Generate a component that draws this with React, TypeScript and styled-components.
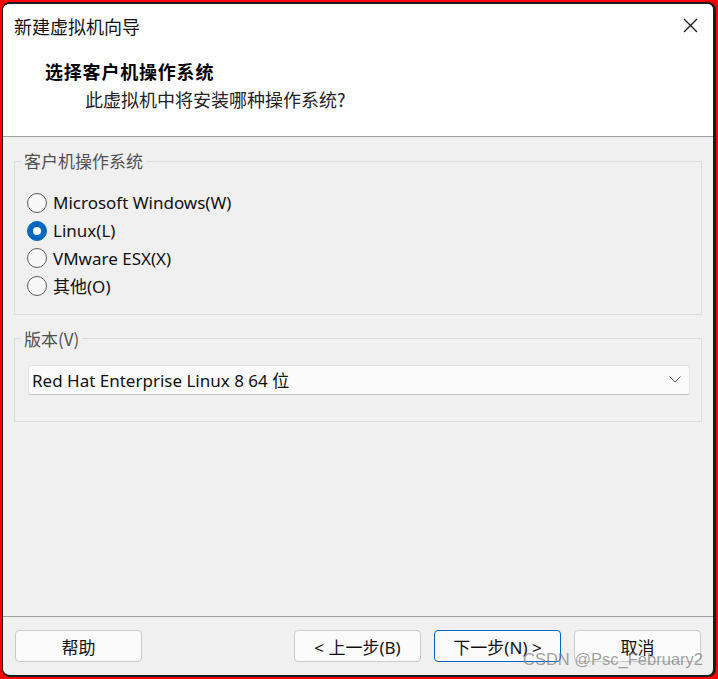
import { useState } from "react";
import styled, { createGlobalStyle, css } from "styled-components";

const GlobalStyle = createGlobalStyle`
  html, body {
    margin: 0;
    padding: 0;
  }
  body {
    background: #ff0000;
    font-family: "Noto Sans", "Noto Sans CJK SC", sans-serif;
  }
  * {
    box-sizing: border-box;
  }
`;

const cjk = `"Noto Sans CJK SC", "Noto Sans", sans-serif`;

const Frame = styled.div`
  position: relative;
  width: 718px;
  height: 679px;
  padding: 2px;
  background: #ff0000;
`;

const Window = styled.div`
  display: flex;
  flex-direction: column;
  height: 100%;
  background: #f0f0f0;
  border-style: solid;
  border-color: #1c1c1c;
  border-width: 2px 3px 2px 1px;
  border-radius: 8px;
  overflow: hidden;
`;

const Header = styled.div`
  background: #ffffff;
  height: 133px;
  border-bottom: 1px solid #a0a0a0;
`;

const TitleBar = styled.div`
  display: flex;
  align-items: center;
  justify-content: space-between;
  height: 43px;
  padding: 0 15px 0 11px;
  font-family: ${cjk};
  font-size: 18px;
  color: #111;
`;

const CloseButton = styled.button`
  display: flex;
  align-items: center;
  justify-content: center;
  width: 15px;
  height: 15px;
  padding: 0;
  border: 0;
  background: none;
  cursor: pointer;
`;

const Heading = styled.div`
  margin-top: 12px;
  padding-left: 42px;
  font-family: ${cjk};
  font-size: 18px;
  font-weight: 700;
  line-height: 24px;
  letter-spacing: 0.8px;
  color: #000;
`;

const SubHeading = styled.div`
  margin-top: 4px;
  padding-left: 82px;
  font-family: ${cjk};
  font-size: 18px;
  line-height: 24px;
  color: #222;
`;

const Content = styled.div`
  flex: 1;
  padding: 0 11px;
`;

const Group = styled.fieldset<{ $pad: string }>`
  margin: 14px 0 0;
  padding: ${(p) => p.$pad};
  border: 1px solid #dcdcdc;
  min-width: 0;
`;

const Legend = styled.legend<{ $shift: number }>`
  margin-left: ${(p) => p.$shift}px;
  padding: 0 3px;
  font-family: ${cjk};
  font-size: 17px;
  line-height: 20px;
  color: #505050;
`;

const RadioRow = styled.label`
  display: flex;
  align-items: center;
  gap: 6px;
  height: 27.7px;
  font-size: 17px;
  color: #111;
  cursor: pointer;
`;

const RadioCircle = styled.span<{ $checked: boolean }>`
  display: flex;
  align-items: center;
  justify-content: center;
  width: 20px;
  height: 20px;
  border-radius: 50%;
  ${(p) =>
    p.$checked
      ? css`
          background: #0067c0;
          border: 1px solid #0067c0;
          &::after {
            content: "";
            width: 8px;
            height: 8px;
            border-radius: 50%;
            background: #fff;
          }
        `
      : css`
          background: #f7f7f7;
          border: 1px solid #5d5d5d;
        `}
`;

const Select = styled.div`
  display: flex;
  align-items: center;
  justify-content: space-between;
  height: 30px;
  padding: 0 8px 0 3px;
  background: #fbfbfb;
  border: 1px solid #e3e3e3;
  border-bottom-color: #c4c4c4;
  border-radius: 3px;
  font-size: 17px;
  color: #111;
`;

const Footer = styled.div`
  display: flex;
  align-items: center;
  height: 59px;
  padding: 0 12px;
  border-top: 1px solid #a0a0a0;
`;

const Spacer = styled.div`
  flex: 1;
`;

const Buttons = styled.div`
  display: flex;
  gap: 13px;
`;

const Button = styled.button<{ $primary?: boolean }>`
  width: 127px;
  height: 32px;
  padding: 0;
  background: #fbfbfb;
  border: 1px solid ${(p) => (p.$primary ? "#0067c0" : "#cacaca")};
  border-radius: 4px;
  font-family: "Noto Sans", "Noto Sans CJK SC", sans-serif;
  font-size: 17px;
  color: #111;
  cursor: pointer;
`;

const Watermark = styled.div`
  position: absolute;
  right: 15px;
  top: 650px;
  font-family: "Liberation Sans", Arial, sans-serif;
  font-size: 16.5px;
  color: rgba(120, 120, 120, 0.7);
  pointer-events: none;
`;

const options = ["Microsoft Windows(W)", "Linux(L)", "VMware ESX(X)", "其他(O)"];

export default function App() {
  const [selected, setSelected] = useState<number>(1);

  return (
    <Frame>
      <GlobalStyle />
      <Window>
        <Header>
          <TitleBar>
            <span>新建虚拟机向导</span>
            <CloseButton aria-label="close">
              <svg width="15" height="15" viewBox="0 0 15 15">
                <path d="M1 1 L14 14 M14 1 L1 14" stroke="#1a1a1a" strokeWidth="1.3" fill="none" />
              </svg>
            </CloseButton>
          </TitleBar>
          <Heading>选择客户机操作系统</Heading>
          <SubHeading>此虚拟机中将安装哪种操作系统?</SubHeading>
        </Header>

        <Content>
          <Group $pad="18px 12px 14px 12px">
            <Legend $shift={-6}>客户机操作系统</Legend>
            {options.map((opt, i) => (
              <RadioRow key={opt} onClick={() => setSelected(i)}>
                <RadioCircle $checked={selected === i} />
                {opt}
              </RadioRow>
            ))}
          </Group>

          <Group $pad="16px 11px 26px 13px">
            <Legend $shift={-7}>版本(V)</Legend>
            <Select>
              <span>Red Hat Enterprise Linux 8 64 位</span>
              <svg width="12" height="7" viewBox="0 0 12 7">
                <path d="M0.5 0.5 L6 6 L11.5 0.5" stroke="#555" strokeWidth="1" fill="none" />
              </svg>
            </Select>
          </Group>
        </Content>

        <Footer>
          <Button>帮助</Button>
          <Spacer />
          <Buttons>
            <Button>&lt; 上一步(B)</Button>
            <Button $primary>下一步(N) &gt;</Button>
            <Button>取消</Button>
          </Buttons>
        </Footer>
      </Window>
      <Watermark>CSDN @Psc_February2</Watermark>
    </Frame>
  );
}
